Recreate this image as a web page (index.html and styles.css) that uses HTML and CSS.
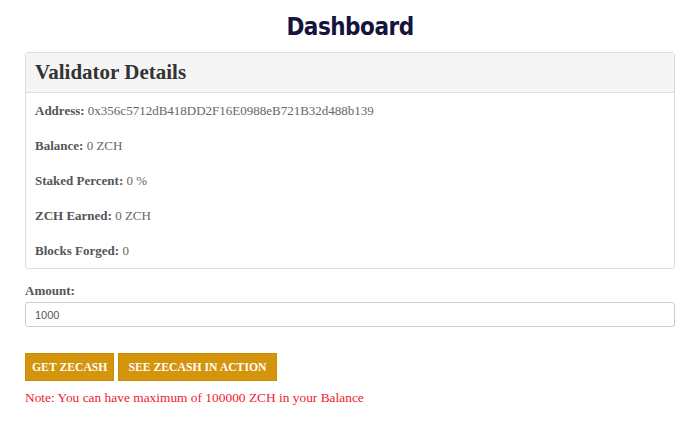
FILE: index.html
```html
<!DOCTYPE html>
<html lang="en">
<head>
    <meta charset="UTF-8">
    <meta name="viewport" content="width=device-width, initial-scale=1.0">
    <title>Dashboard</title>
    <link rel="stylesheet" href="styles.css">
</head>
<body>
    <h1 class="title">Dashboard</h1>

    <div class="panel">
        <div class="panel-heading">
            <h3>Validator Details</h3>
        </div>
        <div class="panel-body">
            <p><strong>Address:</strong> 0x356c5712dB418DD2F16E0988eB721B32d488b139</p>
            <p><strong>Balance:</strong> 0 ZCH</p>
            <p><strong>Staked Percent:</strong> 0 %</p>
            <p><strong>ZCH Earned:</strong> 0 ZCH</p>
            <p><strong>Blocks Forged:</strong> 0</p>
        </div>
    </div>

    <div class="form-group">
        <label for="amount">Amount:</label>
        <input type="text" id="amount" class="form-control" value="1000">
    </div>

    <div class="actions">
        <button class="btn btn-get">GET ZECASH</button>
        <button class="btn">SEE ZECASH IN ACTION</button>
    </div>
    <p class="note">Note: You can have maximum of 100000 ZCH in your Balance</p>
</body>
</html>
```

FILE: styles.css
```css
body {
    font-family: "Liberation Serif", serif;
    font-size: 13px;
    color: #666;
    margin: 0;
    padding: 0 25px;
    background: #fff;
}
.title {
    font-family: "DejaVu Sans", sans-serif;
    font-stretch: condensed;
    font-weight: bold;
    font-size: 24px;
    color: #14143c;
    text-align: center;
    margin: 12px 0 10px;
    line-height: 30px;
    letter-spacing: -0.5px;
}
.panel {
    border: 1px solid #ddd;
    border-radius: 3px;
}
.panel-heading {
    background: #f5f5f5;
    border-bottom: 1px solid #ddd;
    padding: 0 9px;
    height: 39px;
    display: flex;
    align-items: center;
}
.panel-heading h3 {
    margin: 0;
    font-size: 21px;
    font-weight: bold;
    color: #333;
}
.panel-body {
    padding: 0 9px;
}
.panel-body p {
    margin: 0;
    line-height: 35px;
}
.panel-body strong {
    color: #555;
}
.form-group {
    margin-top: 14px;
}
.form-group label {
    display: block;
    font-weight: bold;
    color: #555;
    margin-bottom: 3px;
}
.form-control {
    box-sizing: border-box;
    width: 100%;
    height: 25px;
    border: 1px solid #ccc;
    border-radius: 3px;
    padding: 0 9px;
    font-family: "Liberation Sans", sans-serif;
    font-size: 11px;
    color: #555;
}
.actions {
    margin-top: 26px;
    display: flex;
    gap: 4px;
}
.btn {
    background: #d4940c;
    border: 1px solid #c98a06;
    color: #fff;
    font-family: "Liberation Serif", serif;
    font-weight: bold;
    font-size: 11.7px;
    height: 28px;
    padding: 0 9px;
    border-radius: 0;
}
.btn-get {
    padding: 0 6px;
}
.note {
    color: #f02030;
    font-size: 13.4px;
    margin: 9px 0 0;
}
```
